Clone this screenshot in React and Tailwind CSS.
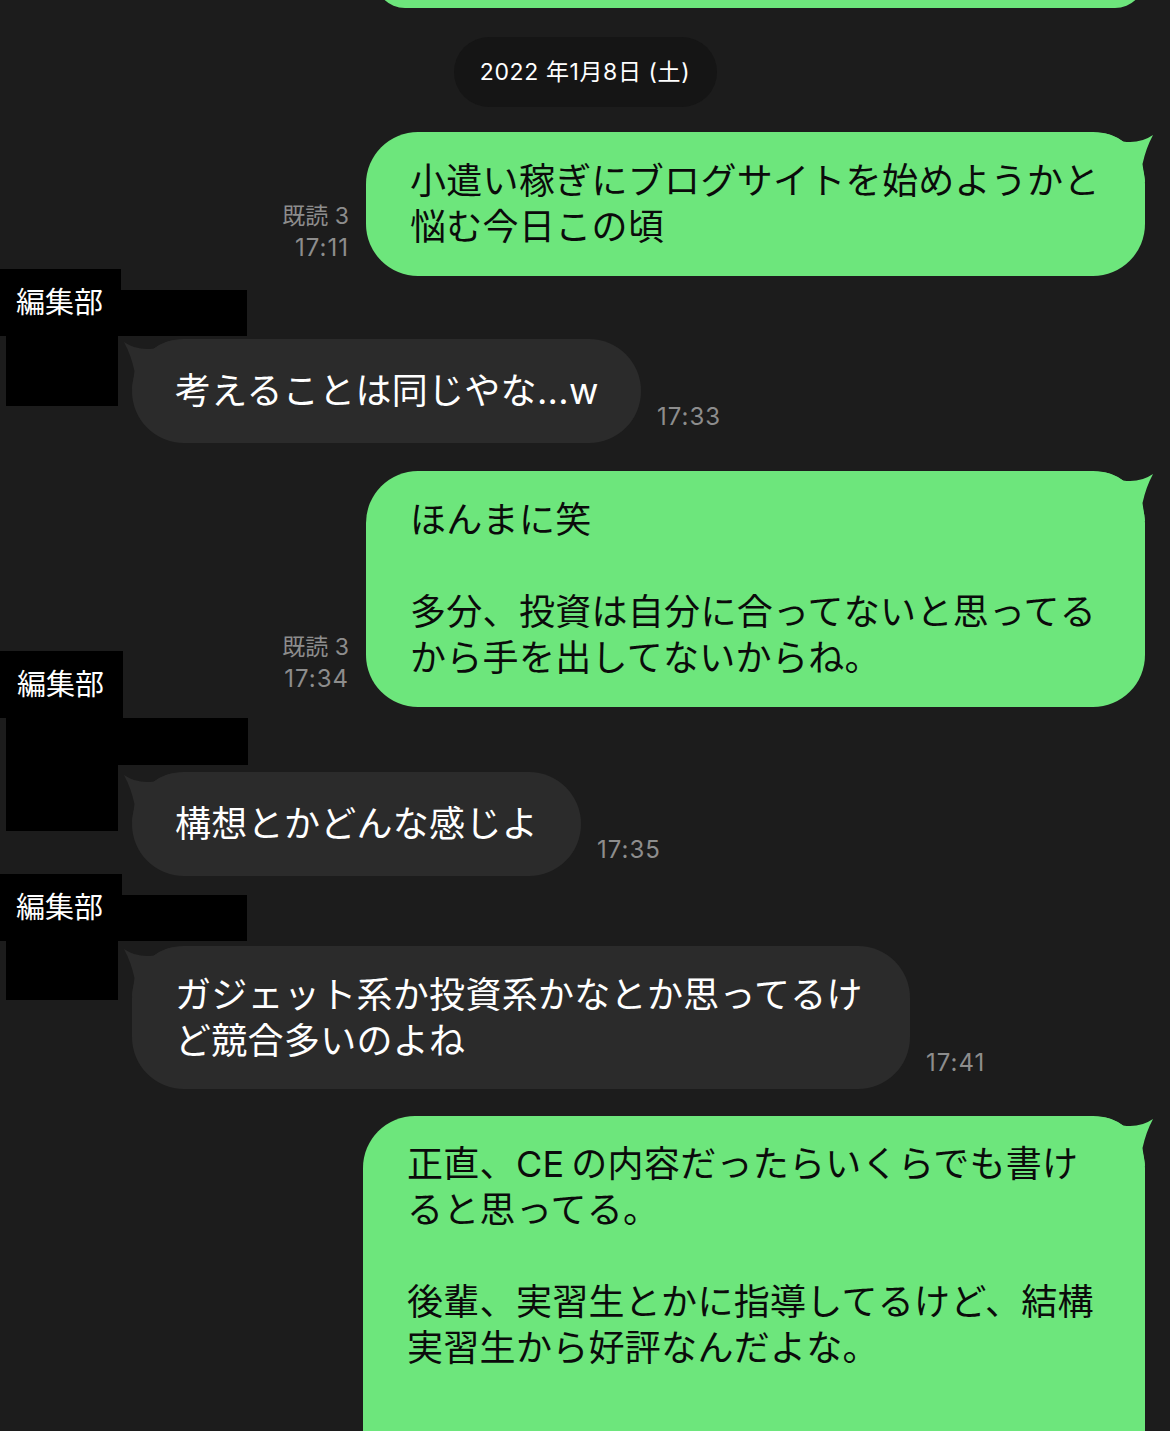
import React from 'react';

// bubble tail, drawn at the top outer corner of a bubble
const Tail = ({ color, flip }) => (
  <svg
    width="60"
    height="52"
    viewBox="0 0 60 52"
    className={flip ? 'absolute -left-[15px] -top-[2px]' : 'absolute -right-[15px] -top-[2px]'}
  >
    <g transform={flip ? 'translate(60 0) scale(-1 1)' : undefined}>
      <path d="M0 52 L0 3 Q12 3 23 11.5 Q40 14 53 5 Q46 18 42.5 34 L45 52 Z" fill={color} />
    </g>
  </svg>
);

const Sent = ({ time, className = '', bubbleClass = '', children }) => (
  <div className={`shrink-0 flex justify-end items-end gap-[17px] pr-[25px] ${className}`}>
    {time && (
      <div className="mb-[13px] text-right text-[23px] leading-[31px] text-[#8d8d8d]">
        <div>既読 3</div>
        <div className="text-[24px] tracking-[1px]">{time}</div>
      </div>
    )}
    <div
      className={`relative shrink-0 rounded-[52px] bg-[#6de67c] pl-[44px] text-[36px] leading-[46px] tracking-[0.3px] text-[#0b0b0b] whitespace-pre ${bubbleClass}`}
    >
      <Tail color="#6de67c" />
      <div className="relative">{children}</div>
    </div>
  </div>
);

const Received = ({ className = '', nameClass, rowClass, bubbleClass, maskB, maskC, time, children }) => (
  <div className={`relative shrink-0 ${className}`}>
    <div className={`h-[67px] bg-black flex items-center text-[29px] text-white ${nameClass}`}>編集部</div>
    <div className={`flex items-end gap-[16px] pl-[132px] ${rowClass}`}>
      <div
        className={`relative shrink-0 rounded-[52px] bg-[#2b2b2b] pl-[43px] text-[36px] leading-[46px] tracking-[0.3px] text-white whitespace-pre ${bubbleClass}`}
      >
        <Tail color="#2b2b2b" flip />
        <div className="relative">{children}</div>
      </div>
      <div className="mb-[11px] text-[24px] leading-[31px] tracking-[1px] text-[#8d8d8d]">{time}</div>
    </div>
    <div className={`absolute bg-black ${maskB}`} />
    <div className={`absolute bg-black ${maskC}`} />
  </div>
);

export default function App() {
  return (
    <div className="w-[1170px] h-[1431px] overflow-hidden bg-[#1c1c1c] flex flex-col font-[family-name:Inter,'Noto_Sans_CJK_JP',sans-serif]">
      {/* end of the previous message */}
      <div className="shrink-0 h-[60px] -mt-[52px] w-[770px] ml-auto mr-[25px] rounded-[52px] bg-[#6de67c]" />

      <div className="shrink-0 mt-[29px] mx-auto w-[263px] h-[70px] rounded-full bg-[#151515] flex items-center justify-center text-[23px] tracking-[0.6px] text-white">
        2022 年1月8日 (土)
      </div>

      <Sent time="17:11" className="mt-[25px]" bubbleClass="w-[779px] py-[26px]">
        {'小遣い稼ぎにブログサイトを始めようかと\n悩む今日この頃'}
      </Sent>

      <Received
        className="-mt-[7px]"
        nameClass="w-[121px] pl-[16px]"
        rowClass="mt-[3px]"
        bubbleClass="w-[509px] py-[29px]"
        maskB="left-[121px] top-[21px] w-[126px] h-[46px]"
        maskC="left-[6px] top-[67px] w-[112px] h-[70px]"
        time="17:33"
      >
        考えることは同じやな...w
      </Received>

      <Sent time="17:34" className="mt-[28px]" bubbleClass="w-[779px] py-[26px]">
        {'ほんまに笑\n\n多分、投資は自分に合ってないと思ってる\nから手を出してないからね。'}
      </Sent>

      <Received
        className="-mt-[56px]"
        nameClass="w-[123px] pl-[17px]"
        rowClass="mt-[54px]"
        bubbleClass="w-[449px] py-[29px]"
        maskB="left-[6px] top-[67px] w-[242px] h-[47px]"
        maskC="left-[6px] top-[114px] w-[112px] h-[66px]"
        time="17:35"
      >
        構想とかどんな感じよ
      </Received>

      <Received
        className="-mt-[2px]"
        nameClass="w-[122px] pl-[16px]"
        rowClass="mt-[5px]"
        bubbleClass="w-[778px] pt-[26px] pb-[25px]"
        maskB="left-[122px] top-[21px] w-[125px] h-[46px]"
        maskC="left-[6px] top-[67px] w-[112px] h-[59px]"
        time="17:41"
      >
        {'ガジェット系か投資系かなとか思ってるけ\nど競合多いのよね'}
      </Received>

      <Sent className="mt-[27px]" bubbleClass="w-[782px] h-[420px] pt-[25px]">
        {'正直、CE\u2009の内容だったらいくらでも書け\nると思ってる。\n\n後輩、実習生とかに指導してるけど、結構\n実習生から好評なんだよな。'}
      </Sent>
    </div>
  );
}
